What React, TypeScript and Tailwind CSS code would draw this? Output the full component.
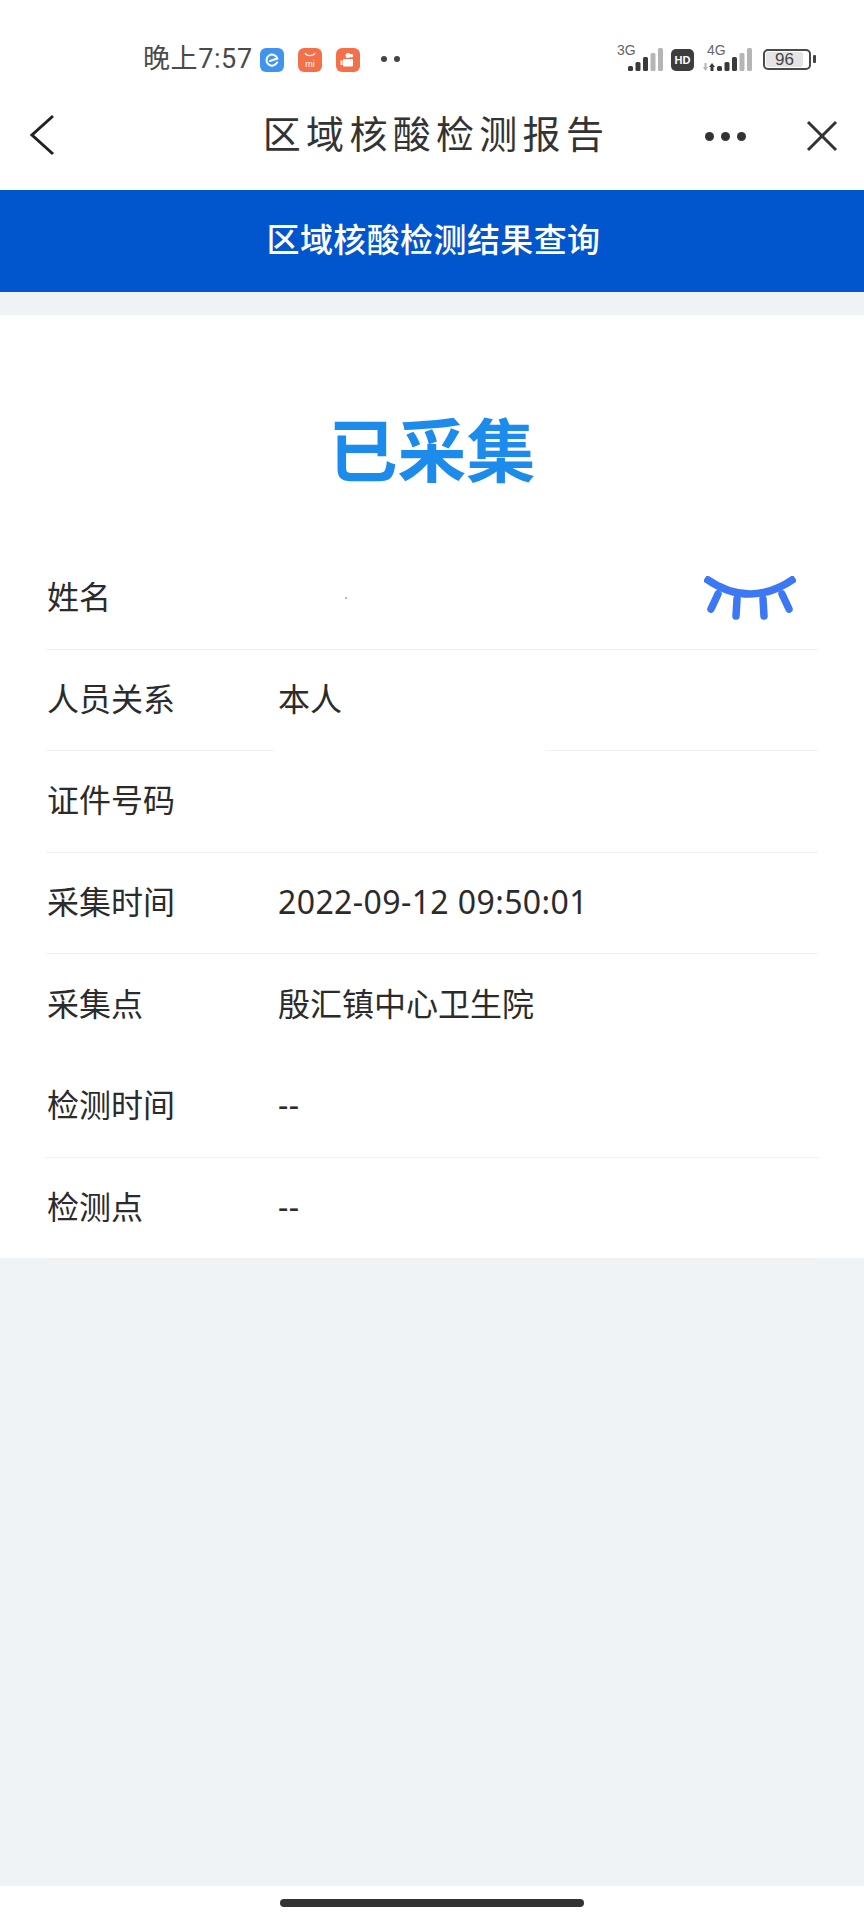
const FONT = "font-['Roboto','Noto_Sans_CJK_SC',sans-serif]"

function SignalBars({ lit }: { lit: number }) {
  const heights = [5, 9, 14, 18, 23]
  return (
    <svg width="35" height="23" viewBox="0 0 35 23">
      {heights.map((h, i) => (
        <rect
          key={i}
          x={i * 7.5}
          y={23 - h}
          width="5"
          height={h}
          rx="1.5"
          fill={i < lit ? '#3a3a3a' : '#b5b5b5'}
        />
      ))}
    </svg>
  )
}

function StatusBar() {
  return (
    <div className="h-[86px] pt-[42px] pl-[143px] pr-[48px] flex items-start">
      <span className="text-[27px] leading-[34px] tracking-[0.6px] text-[#4a4a4a] w-[117px] whitespace-nowrap">
        晚上7:57
      </span>
      <div className="flex gap-[14px] mt-[6px]">
        <div className="w-[24px] h-[24px] rounded-[6px] bg-[#3f94ee] flex items-center justify-center">
          <svg width="14" height="14" viewBox="0 0 14 14" fill="none" stroke="#fff" strokeWidth="2">
            <path d="M12 9.5A5.5 5.5 0 1 1 12.3 5.5L5 8" strokeLinecap="round" />
          </svg>
        </div>
        <div className="w-[24px] h-[24px] rounded-[6px] bg-[#f4704a] flex flex-col items-center pt-[4px]">
          <svg width="12" height="5" viewBox="0 0 12 5" fill="none" stroke="#fff" strokeWidth="1.2">
            <path d="M1 1c1.5 3.5 8.5 3.5 10 0" />
          </svg>
          <span className="text-[9px] leading-[10px] mt-[2px] text-white font-['Liberation_Sans',sans-serif]">mi</span>
        </div>
        <div className="w-[24px] h-[24px] rounded-[6px] bg-[#f4704a] flex items-center justify-center">
          <svg width="16" height="16" viewBox="0 0 16 16" fill="#fff">
            <circle cx="8" cy="3.5" r="2.5" />
            <circle cx="11.5" cy="3.8" r="1.8" />
            <rect x="3" y="7" width="10" height="7.5" rx="1" />
            <rect x="0.5" y="8.5" width="2" height="4.5" />
          </svg>
        </div>
      </div>
      <div className="flex gap-[7px] ml-[21px] mt-[14px]">
        <div className="w-[6px] h-[6px] rounded-full bg-[#444]" />
        <div className="w-[6px] h-[6px] rounded-full bg-[#444]" />
      </div>
      <div className="ml-auto flex items-end h-[26px] mt-[3px] text-[#666]">
        <div className="relative w-[46px] h-[26px] flex items-end justify-end">
          <span className="absolute left-0 top-0 text-[14px] leading-[11px] font-['Liberation_Sans',sans-serif]">3G</span>
          <SignalBars lit={3} />
        </div>
        <div className="w-[23px] h-[22px] ml-[8px] rounded-[5px] bg-[#3d3d3d] text-white text-[11px] leading-[22px] font-bold text-center font-['Liberation_Sans',sans-serif]">
          HD
        </div>
        <div className="relative w-[49px] h-[26px] ml-[9px] flex items-end justify-end">
          <span className="absolute left-[4px] top-0 text-[14px] leading-[11px] font-['Liberation_Sans',sans-serif]">4G</span>
          <svg className="absolute left-0 bottom-0" width="12" height="8" viewBox="0 0 12 8">
            <path d="M0 4h1.5V0h2v4H5L2.5 8z" fill="#b5b5b5" />
            <path d="M9 0l3 4h-1.5v4h-3V4H6z" fill="#3a3a3a" />
          </svg>
          <SignalBars lit={3} />
        </div>
        <div className="w-[48px] h-[21px] ml-[11px] mb-[1px] rounded-[5px] border-2 border-[#4a4a4a] p-[1px] flex">
          <div className="w-[37px] bg-[#e4e4e4] rounded-[2px] text-[17px] leading-[15px] text-center text-[#444] font-['Liberation_Sans',sans-serif]">
            96
          </div>
        </div>
        <div className="w-[3px] h-[8px] ml-[2px] mb-[8px] rounded-[1px] bg-[#444]" />
      </div>
    </div>
  )
}

function NavBar() {
  return (
    <div className="h-[104px] pb-[2px] relative flex items-center justify-center">
      <svg className="absolute left-[28px] top-[28px]" width="28" height="42" viewBox="0 0 28 42" fill="none" stroke="#222" strokeWidth="3">
        <path d="M25 2 4 21l21 19" />
      </svg>
      <div className="text-[38px] tracking-[5.3px] text-[#333] leading-[44px] -mt-[5px] pl-[8px]">
        区域核酸检测报告
      </div>
      <div className="absolute left-[705px] top-[46px] flex gap-[7px]">
        <div className="w-[9px] h-[9px] rounded-full bg-[#333]" />
        <div className="w-[9px] h-[9px] rounded-full bg-[#333]" />
        <div className="w-[9px] h-[9px] rounded-full bg-[#333]" />
      </div>
      <svg className="absolute left-[806px] top-[34px]" width="32" height="32" viewBox="0 0 32 32" fill="none" stroke="#333" strokeWidth="3">
        <path d="M2 2l28 28M30 2 2 30" />
      </svg>
    </div>
  )
}

function EyeClosed() {
  return (
    <svg width="92" height="44" viewBox="0 0 92 44" fill="none" stroke="#3d78f4" strokeWidth="7.5" strokeLinecap="round">
      <path d="M1 2Q46 34 91 2" strokeLinecap="butt" />
      <path d="M14 18 7 33M33 23l-1 17M59 23l1 17M78 18l7 15" />
    </svg>
  )
}

type RowProps = {
  label: string
  value?: string
  line?: 'full' | 'gap' | 'none'
  latin?: boolean
  children?: React.ReactNode
}

function Row({ label, value, line = 'full', latin = false, children }: RowProps) {
  return (
    <div className="h-[101.6px] flex flex-col">
      <div className="flex-1 flex items-center justify-between">
        <div className="flex items-center text-[32px] leading-[40px] text-[#2b2b2b]">
          <span className="w-[232px] pl-[1px]">{label}</span>
          <span className={latin ? "font-['Noto_Sans',sans-serif] tracking-[0.4px] -mt-[2px]" : ''}>{value}</span>
        </div>
        {children}
      </div>
      {line === 'full' && <div className="h-px bg-[#f1f1f1]" />}
      {line === 'gap' && (
        <div className="flex justify-between">
          <div className="w-[228px] h-px bg-[#f1f1f1]" />
          <div className="w-[273px] h-px bg-[#f1f1f1]" />
        </div>
      )}
      {line === 'none' && <div className="h-px" />}
    </div>
  )
}

export default function App() {
  return (
    <div className={`w-[864px] h-[1920px] bg-white flex flex-col ${FONT}`}>
      <StatusBar />
      <NavBar />
      <div className="h-[102px] bg-[#0256cd] flex items-center justify-center pl-[3px] text-white text-[33px] tracking-[0.4px] font-medium">
        区域核酸检测结果查询
      </div>
      <div className="flex-1 bg-[#eff3f6] pt-[23px] flex flex-col">
        <div className="bg-white h-[943px] px-[46px]">
          <div className="h-[233px] flex items-center justify-center">
            <span className="text-[69px] leading-[80px] font-bold text-[#1d8bec] mt-[44px]">已采集</span>
          </div>
          <Row label="姓名">
            <div className="flex-1 pl-[67px]">
              <div className="w-[2px] h-[2px] bg-[#bbb]" />
            </div>
            <div className="pr-[22px]">
              <EyeClosed />
            </div>
          </Row>
          <Row label="人员关系" value="本人" line="gap" />
          <Row label="证件号码" />
          <Row label="采集时间" value="2022-09-12 09:50:01" latin />
          <Row label="采集点" value="殷汇镇中心卫生院" line="none" />
          <Row label="检测时间" value="--" latin />
          <Row label="检测点" value="--" latin />
        </div>
      </div>
      <div className="h-[34px] bg-white flex justify-center pt-[13px]">
        <div className="w-[304px] h-[8px] rounded-full bg-[#333]" />
      </div>
    </div>
  )
}
